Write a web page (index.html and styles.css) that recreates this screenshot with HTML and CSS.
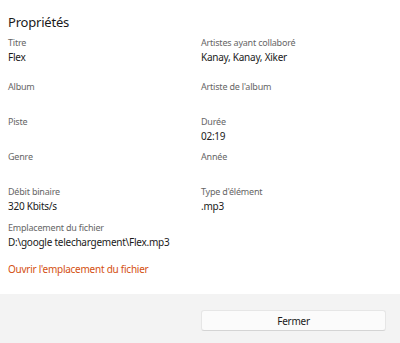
FILE: index.html
```html
<!DOCTYPE html>
<html lang="fr">
<head>
    <meta charset="UTF-8">
    <meta name="viewport" content="width=device-width, initial-scale=1.0">
    <title>Propriétés</title>
    <link rel="stylesheet" href="styles.css">
</head>
<body>

    <div class="dialog">
        <div class="content">
            <h1>Propriétés</h1>

            <div class="props">
                <div class="row row-first">
                    <div class="field">
                        <div class="label">Titre</div>
                        <div class="value">Flex</div>
                    </div>
                    <div class="field">
                        <div class="label">Artistes ayant collaboré</div>
                        <div class="value">Kanay, Kanay, Xiker</div>
                    </div>
                </div>
                <div class="row">
                    <div class="field">
                        <div class="label">Album</div>
                        <div class="value"></div>
                    </div>
                    <div class="field">
                        <div class="label">Artiste de l'album</div>
                        <div class="value"></div>
                    </div>
                </div>
                <div class="row">
                    <div class="field">
                        <div class="label">Piste</div>
                        <div class="value"></div>
                    </div>
                    <div class="field">
                        <div class="label">Durée</div>
                        <div class="value">02:19</div>
                    </div>
                </div>
                <div class="row">
                    <div class="field">
                        <div class="label">Genre</div>
                        <div class="value"></div>
                    </div>
                    <div class="field">
                        <div class="label">Année</div>
                        <div class="value"></div>
                    </div>
                </div>
                <div class="row row-wide">
                    <div class="field">
                        <div class="label">Débit binaire</div>
                        <div class="value">320 Kbits/s</div>
                    </div>
                    <div class="field">
                        <div class="label">Type d'élément</div>
                        <div class="value">.mp3</div>
                    </div>
                </div>
                <div class="field">
                    <div class="label">Emplacement du fichier</div>
                    <div class="value">D:\google telechargement\Flex.mp3</div>
                </div>
            </div>

            <a class="open-link" href="#">Ouvrir l'emplacement du fichier</a>
        </div>

        <div class="footer">
            <button type="button">Fermer</button>
        </div>
    </div>

</body>
</html>
```

FILE: styles.css
```css
body {
    font-family: 'Noto Sans', 'Open Sans', sans-serif;
    margin: 0;
    padding: 0;
    background-color: white;
    color: #1a1a1a;
}
.dialog {
    width: 400px;
    height: 343px;
    display: flex;
    flex-direction: column;
}
.content {
    padding: 12px 8px 0 8px;
    height: 282px;
}
h1 {
    font-size: 13px;
    font-weight: normal;
    line-height: 20px;
    letter-spacing: -0.2px;
    margin: 0 0 4px 0;
}
.props {
    display: flex;
    flex-direction: column;
    gap: 7px;
}
.row {
    display: grid;
    grid-template-columns: 193px 1fr;
}
.row-first {
    margin-bottom: 9px;
}
.row-wide {
    margin-bottom: 1px;
}
.label {
    font-size: 9px;
    line-height: 14px;
    letter-spacing: -0.2px;
    color: #666666;
}
.value {
    font-size: 10px;
    line-height: 14px;
    letter-spacing: -0.25px;
    min-height: 14px;
}
.open-link {
    display: block;
    margin-top: 13px;
    font-size: 10px;
    line-height: 14px;
    letter-spacing: -0.25px;
    color: #d4500f;
    text-decoration: none;
}
.footer {
    flex: 1;
    background: #f3f3f3;
    display: flex;
    justify-content: flex-end;
    align-items: flex-start;
    padding: 16px 14px 0 0;
}
button {
    width: 185px;
    height: 21px;
    padding: 0;
    background: #fbfbfb;
    color: #1a1a1a;
    border: 1px solid #e6e6e6;
    border-bottom-color: #d4d4d4;
    border-radius: 3px;
    font-family: inherit;
    font-size: 10px;
    letter-spacing: -0.25px;
    cursor: pointer;
}
```
